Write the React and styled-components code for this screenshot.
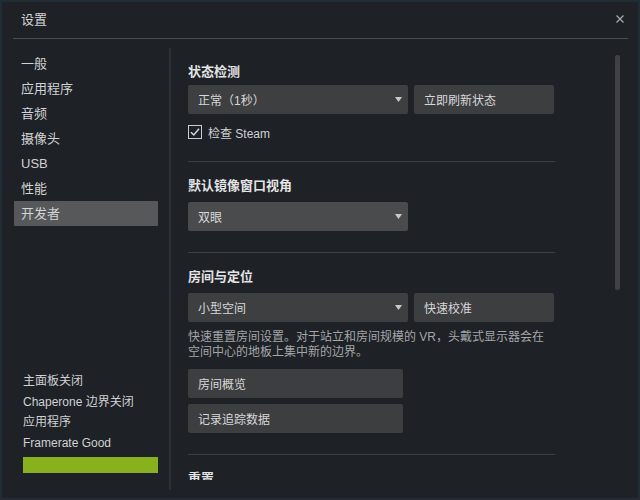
import React from "react";
import styled, { createGlobalStyle } from "styled-components";

const Global = createGlobalStyle`
  html, body { margin: 0; padding: 0; background: #1e2125; }
  body { font-family: "Liberation Sans", "Noto Sans CJK SC", sans-serif; }
  * { box-sizing: border-box; }
`;

const Window = styled.div`
  width: 640px;
  height: 500px;
  background: #1e2125;
  box-shadow: inset 0 0 0 2px #222c35;
  display: flex;
  flex-direction: column;
  color: #d0d2d4;
  overflow: hidden;
`;

const TitleBar = styled.div`
  height: 39px;
  margin: 0 12px 0 13px;
  padding: 0 4px 1px 8px;
  border-bottom: 1px solid #4a4d51;
  display: flex;
  align-items: center;
  justify-content: space-between;
`;

const Title = styled.div`
  font-size: 13px;
  color: #d2d4d6;
`;

const Close = styled.button`
  background: none;
  border: 0;
  padding: 0;
  width: 8px;
  height: 8px;
  display: flex;
  color: #a7a9ab;
`;

const Body = styled.div`
  flex: 1;
  min-height: 0;
  display: flex;
`;

const Sidebar = styled.nav`
  width: 169px;
  padding-left: 14px;
  display: flex;
  flex-direction: column;
  justify-content: space-between;
`;

const NavList = styled.div`
  padding-top: 12px;
  width: 144px;
  display: flex;
  flex-direction: column;
`;

const NavItem = styled.div`
  height: 25px;
  line-height: 25px;
  padding: 0 7px;
  font-size: 13px;
  color: #d0d2d4;
  border-radius: 1px;
  background: ${(p) => (p.$active ? "#575859" : "transparent")};
`;

const Status = styled.div`
  margin: 0 11px 27px 9px;
  display: flex;
  flex-direction: column;
`;

const StatusLine = styled.div`
  font-size: 12px;
  line-height: 20.5px;
  color: #cfd1d3;
  white-space: nowrap;
`;

const GoodBar = styled.div`
  margin-top: 4px;
  height: 16px;
  background: #89b11e;
`;

const Divider = styled.div`
  width: 2px;
  margin: 9px 0 10px;
  background: #2c3034;
`;

const Panel = styled.div`
  flex: 1;
  display: flex;
  margin-bottom: 20px;
  overflow: hidden;
`;

const ScrollArea = styled.div`
  flex: 1;
  padding-left: 17px;
  overflow: hidden;
`;

const Column = styled.div`
  width: 367px;
`;

const Section = styled.section`
  padding-top: ${(p) => p.$pt}px;
  padding-bottom: ${(p) => p.$pb}px;
  border-bottom: ${(p) => (p.$last ? "none" : "1px solid #3b3e42")};
`;

const Heading = styled.h3`
  margin: 0 0 ${(p) => p.$gap}px;
  font-size: 13px;
  line-height: 18px;
  font-weight: bold;
  color: #e2e3e4;
`;

const Row = styled.div`
  display: flex;
  gap: 6px;
`;

const Select = styled.div`
  width: 220px;
  height: 29px;
  padding: 0 6px 0 10px;
  border-radius: 2px;
  background: ${(p) => (p.$hover ? "#4a4b4c" : "#3e3f41")};
  display: flex;
  align-items: center;
  justify-content: space-between;
  font-size: 12px;
  color: #d6d7d8;
`;

const Button = styled.div`
  width: ${(p) => p.$w}px;
  height: 29px;
  margin-top: ${(p) => p.$mt || 0}px;
  padding: 0 10px;
  border-radius: 2px;
  background: #3d3e40;
  display: flex;
  align-items: center;
  font-size: 12px;
  color: #d6d7d8;
`;

const CheckRow = styled.label`
  margin-top: 9px;
  height: 18px;
  display: flex;
  align-items: center;
  gap: 6px;
  font-size: 12px;
  color: #cfd1d3;
`;

const Description = styled.p`
  margin: 8px 0 0;
  max-width: 360px;
  font-size: 12px;
  line-height: 15px;
  color: #a3a6a9;
`;

const ScrollTrack = styled.div`
  width: 5px;
  margin: 16px 20px 0 0;
`;

const Thumb = styled.div`
  height: 235px;
  border-radius: 2px;
  background: #3f4144;
`;

const Arrow = () => (
  <svg width="7" height="5" viewBox="0 0 7 5">
    <path d="M0 0H7L3.5 5Z" fill="#c8c9ca" />
  </svg>
);

const CheckBox = () => (
  <svg width="14" height="14" viewBox="0 0 14 14">
    <rect x="0.5" y="0.5" width="13" height="13" fill="none" stroke="#c9cbcd" />
    <path d="M3 7.2L5.8 10L11 3.8" fill="none" stroke="#d4d6d8" strokeWidth="1.5" />
  </svg>
);

const nav = ["一般", "应用程序", "音频", "摄像头", "USB", "性能", "开发者"];

export default function App() {
  return (
    <>
      <Global />
      <Window>
        <TitleBar>
          <Title>设置</Title>
          <Close aria-label="close">
            <svg width="8" height="8" viewBox="0 0 8 8">
              <path d="M0.5 0.5L7.5 7.5M7.5 0.5L0.5 7.5" stroke="currentColor" strokeWidth="1.3" />
            </svg>
          </Close>
        </TitleBar>
        <Body>
          <Sidebar>
            <NavList>
              {nav.map((n) => (
                <NavItem key={n} $active={n === "开发者"}>
                  {n}
                </NavItem>
              ))}
            </NavList>
            <Status>
              <StatusLine>主面板关闭</StatusLine>
              <StatusLine>Chaperone 边界关闭</StatusLine>
              <StatusLine>应用程序</StatusLine>
              <StatusLine>Framerate Good</StatusLine>
              <GoodBar />
            </Status>
          </Sidebar>
          <Divider />
          <Panel>
            <ScrollArea>
              <Column>
                <Section $pt={24} $pb={20}>
                  <Heading $gap={4}>状态检测</Heading>
                  <Row>
                    <Select>
                      <span>正常（1秒）</span>
                      <Arrow />
                    </Select>
                    <Button $w={140}>立即刷新状态</Button>
                  </Row>
                  <CheckRow>
                    <CheckBox />
                    <span>检查 Steam</span>
                  </CheckRow>
                </Section>
                <Section $pt={15} $pb={21}>
                  <Heading $gap={7}>默认镜像窗口视角</Heading>
                  <Select $hover>
                    <span>双眼</span>
                    <Arrow />
                  </Select>
                </Section>
                <Section $pt={15} $pb={21}>
                  <Heading $gap={7}>房间与定位</Heading>
                  <Row>
                    <Select>
                      <span>小型空间</span>
                      <Arrow />
                    </Select>
                    <Button $w={140}>快速校准</Button>
                  </Row>
                  <Description>
                    快速重置房间设置。对于站立和房间规模的 VR，头戴式显示器会在空间中心的地板上集中新的边界。
                  </Description>
                  <Button $w={215} $mt={9}>房间概览</Button>
                  <Button $w={215} $mt={6}>记录追踪数据</Button>
                </Section>
                <Section $pt={15} $pb={0} $last>
                  <Heading $gap={7}>重置</Heading>
                </Section>
              </Column>
            </ScrollArea>
            <ScrollTrack>
              <Thumb />
            </ScrollTrack>
          </Panel>
        </Body>
      </Window>
    </>
  );
}
